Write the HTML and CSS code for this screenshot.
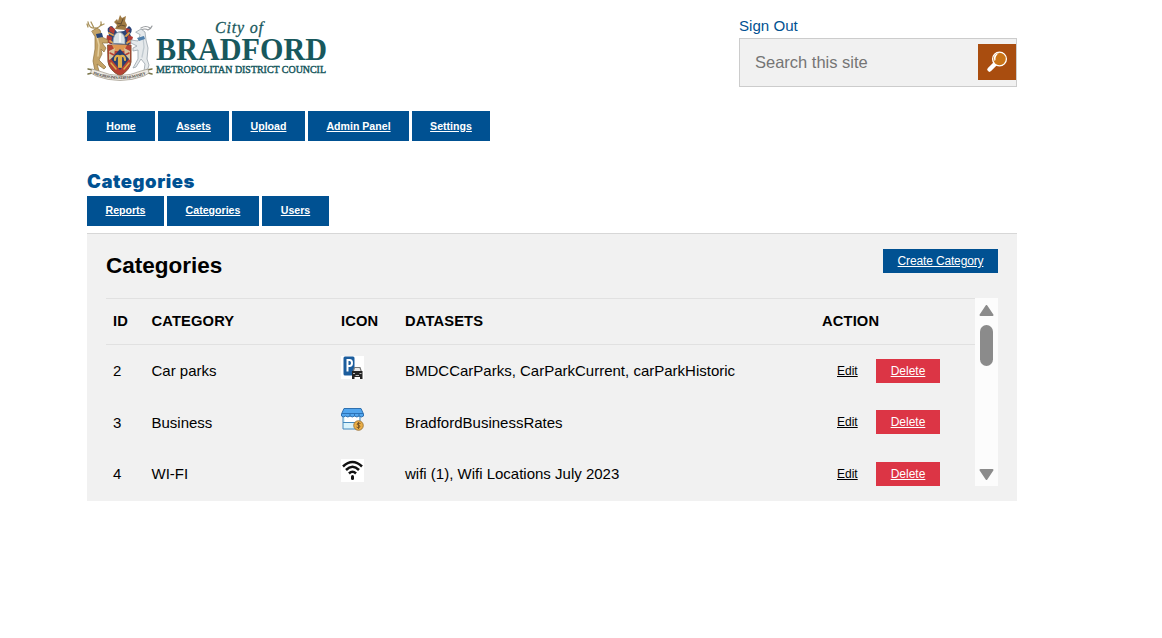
FILE: index.html
```html
<!DOCTYPE html>
<html lang="en">
<head>
<meta charset="utf-8">
<title>Categories</title>
<link rel="stylesheet" href="styles.css">
</head>
<body>
<div class="page">
  <header class="header">
    <svg class="logo" width="244" height="72" viewBox="0 0 244 72">
      <g stroke-linecap="round" stroke-linejoin="round">
        <path d="M23 31Q19 26 22 21Q18 14 25 13L30 19L37 18L42 13Q47 16 43 21Q47 27 42 32Z" fill="#2b4478"/>
        <path d="M20 22l5 2-1 7-5-2zM41 22l5 2-2 7-4-2zM23 13l5 3-1 5-5-3zM38 15l5 1-3 5z" fill="#b23a33"/>
        <path d="M22 20l4 2M42 20l-3 3M23 28l3 2M43 28l-3 2" stroke="#e2a24a" stroke-width="1.800"/>
        <path d="M28 16L30 12L27 9L30 6L31 8L33 2L35 5L39 3L38 8L40 12L38 17Z" fill="#a07b44"/>
        <path d="M30 10l4 1 2-5M31 14l3-2 4 1" fill="none" stroke="#59452c" stroke-width=".9"/>
        <path d="M26 30Q26 20 32 19Q39 20 38 31Z" fill="#d9e2e6" stroke="#8794a0" stroke-width=".8"/>
        <path d="M33 21v8" stroke="#fff" stroke-width="1.500"/>
        <path d="M9 15Q2 16 1 9M7 15L4 9M10 15Q15 13 14 9M13 13l4-2M1 14l-1-3" fill="none" stroke="#a9925c" stroke-width="1.300"/>
        <path d="M5 18L10 15L13 17L15 24L21 27L21 30L15 30L19 35L17 39L14 36L15 41L12 47L19 54L17 56L10 51L12 58L8 58L6 48L8 36L8 24Z" fill="#c5a468" stroke="#8e713e" stroke-width=".7"/>
        <path d="M10 24L12 32L11 43" fill="none" stroke="#e4cf9f" stroke-width="1.500"/>
        <path d="M9 21L15 20L16 24L10 25Z" fill="#284477"/>
        <path d="M54 17Q58 15 61 17Q64 16 65 13M54 15Q59 12 63 15" fill="none" stroke="#9a9da0" stroke-width="1.200"/>
        <path d="M49 19L54 16L58 19L59 27L61 35L60 46L62 52L60 59L57 58L58 51L54 46L49 54L46 55L51 46L51 37L46 38L46 35L50 33L44 30L44 27L51 28L53 22Z" fill="#e5e9eb" stroke="#9ba5ac" stroke-width=".8"/>
        <path d="M56 24L57 34L55 44" fill="none" stroke="#c1cad0" stroke-width="1.300"/>
        <path d="M50 25L57 23L58 26L52 28Z" fill="#5080ac"/>
        <path d="M21 32H44V49Q43 57 33 63Q22 57 21 49Z" fill="#b74234" stroke="#87512e"/>
        <path d="M25 32H40L37 38L28 38Z" fill="#df9851"/>
        <path d="M22 38L28 35L27 44L22 47ZM43 38L37 35L38 44L43 47Z" fill="#d6c39b"/>
        <path d="M23 40l4 2M38 42l4-2" stroke="#b74234" stroke-width="1.500"/>
        <path d="M33 36L42 46L33 57L24 46Z" fill="#283e70"/>
        <path d="M28 47Q28 42 32 43V54M38 47Q38 42 34 43V54" fill="none" stroke="#dfb04b" stroke-width="2.200"/>
        <path d="M24 50l5 6M42 50l-5 6" stroke="#dfb04b" stroke-width="1.500"/>
        <path d="M1 56L6 57L5 60L1 61M65 56L60 57L61 60L65 61" fill="none" stroke="#787346" stroke-width="1.500"/>
        <path d="M5 56L12 58Q33 67 54 58L61 56L62 60L57 63Q33 72 9 63L4 60Z" fill="#eeeae3" stroke="#9b9385" stroke-width=".7"/>
      </g>
      <path id="motto" d="M6 61Q33 71 60 61" fill="none"/>
      <text class="motto"><textPath href="#motto" textLength="54">PROGRESS INDUSTRY HUMANITY</textPath></text>
      <text class="logo-city" x="128" y="20" textLength="48">City of</text>
      <text class="logo-name" x="69" y="47" textLength="171" lengthAdjust="spacingAndGlyphs">BRADFORD</text>
      <text class="logo-sub" x="69" y="60" textLength="170" lengthAdjust="spacingAndGlyphs">METROPOLITAN DISTRICT COUNCIL</text>
    </svg>
    <div class="account">
      <a class="sign-out" href="#">Sign Out</a>
      <form class="search">
        <input class="search-input" type="text" placeholder="Search this site" aria-label="Search this site">
        <button class="search-button" type="button" aria-label="Search">
          <svg width="38" height="36" viewBox="0 0 38 36">
            <path d="M17 20L11.500 25.500" stroke="#fff" stroke-width="4.500" stroke-linecap="round"/>
            <circle cx="21.500" cy="15" r="6.900" fill="#ca7417" stroke="#fff" stroke-width="1.300"/>
            <path d="M16.500 17Q14 10 21 9Q17 12 17.500 16Z" fill="#fff"/>
          </svg>
        </button>
      </form>
    </div>
  </header>
  <nav class="nav main-nav">
    <a class="w-home" href="#">Home</a><a class="w-assets" href="#">Assets</a><a class="w-upload" href="#">Upload</a><a class="w-admin" href="#">Admin Panel</a><a class="w-settings" href="#">Settings</a>
  </nav>
  <h1 class="page-title">Categories</h1>
  <nav class="nav sub-nav">
    <a class="w-reports" href="#">Reports</a><a class="w-categories" href="#">Categories</a><a class="w-users" href="#">Users</a>
  </nav>
  <main class="panel">
    <div class="panel-head">
      <h2 class="panel-title">Categories</h2>
      <a class="create" href="#">Create Category</a>
    </div>
    <div class="table-wrap">
      <div class="table">
        <div class="row head"><span>ID</span><span>CATEGORY</span><span>ICON</span><span>DATASETS</span><span>ACTION</span></div>
        <div class="row">
          <span>2</span><span>Car parks</span>
          <svg class="icon" width="23" height="23" viewBox="0 0 23 23">
            <path d="M0 0h23v23H0z" fill="#fff"/><rect x="2.500" y=".5" width="11" height="19" rx="1.500" fill="#1c5d9d"/>
            <path d="M6.500 15.500V4H8.500Q11 4 11 7T8.500 10H6.500" fill="none" stroke="#fff" stroke-width="2"/>
            <path d="M12 16L13.500 11.500H19L20.500 16" fill="#e9e9e9" stroke="#777" stroke-width="1.200"/>
            <path d="M11 15H21.500V23H19V21H13.500V23H11Z" fill="#242424"/>
            <path d="M12 17.500h2M18.500 17.500h2M14.500 19.500h3.500" stroke="#bbb"/>
          </svg>
          <span>BMDCCarParks, CarParkCurrent, carParkHistoric</span>
          <div class="actions"><a class="edit" href="#">Edit</a><a class="delete" href="#">Delete</a></div>
        </div>
        <div class="row">
          <span>3</span><span>Business</span>
          <svg class="icon" width="23" height="23" viewBox="0 0 23 23">
            <path d="M2 8V21H19V8" fill="#d9f3fb" stroke="#4388bd"/>
            <path d="M4 9h14v5H4z" fill="#fff"/><path d="M2 14.500h15" stroke="#4388bd"/>
            <path d="M3 .5H20L22.500 6V8Q20.500 10 18 8Q16 10 13.500 8Q11.500 10 9 8Q7 10 4.500 8Q2 10 .5 8V6Z" fill="#52a6ee" stroke="#2f70af"/>
            <path d="M1 5.500h21M9 6v2M13.500 6v2M18 6v2" stroke="#2b72b7"/>
            <circle cx="17.500" cy="17.500" r="4.800" fill="#e9ae48" stroke="#936b2e" stroke-width=".8"/>
            <path d="M19.500 15.500Q16 14 16 16.500Q19.500 17 19 19Q17 20.500 15.500 19M17.500 14v7" fill="none" stroke="#755426" stroke-width=".9"/>
          </svg>
          <span>BradfordBusinessRates</span>
          <div class="actions"><a class="edit" href="#">Edit</a><a class="delete" href="#">Delete</a></div>
        </div>
        <div class="row">
          <span>4</span><span>WI-FI</span>
          <svg class="icon" width="23" height="23" viewBox="0 0 23 23">
            <path d="M0 0h23v23H0z" fill="#fff"/>
            <path d="M2 7.500Q11.500-1.500 21 7.500M5 11Q11.500 4.500 18 11M8 14.500Q11.500 11 15 14.500" fill="none" stroke="#111" stroke-width="2.500"/>
            <path d="M11.500 17.500v2" stroke="#111" stroke-width="3" stroke-linecap="round"/>
          </svg>
          <span>wifi (1), Wifi Locations July 2023</span>
          <div class="actions"><a class="edit" href="#">Edit</a><a class="delete" href="#">Delete</a></div>
        </div>
      </div>
      <div class="scrollbar">
        <svg width="15" height="11" viewBox="0 0 15 11"><path d="M7.500 1L13.500 10H1.500Z" fill="#8b8b8b" stroke="#8b8b8b" stroke-width="2" stroke-linejoin="round"/></svg>
        <div class="thumb"></div>
        <svg class="down" width="15" height="11" viewBox="0 0 15 11"><path d="M7.500 10L1.500 1H13.500Z" fill="#8b8b8b" stroke="#8b8b8b" stroke-width="2" stroke-linejoin="round"/></svg>
      </div>
    </div>
  </main>
</div>
</body>
</html>
```
FILE: styles.css
```css
* { box-sizing: border-box; }
body { margin: 0; background: #fff; color: #000; font-family: "Liberation Sans", Arial, sans-serif; overflow: hidden; }
.page { width: 930px; margin-left: 87px; padding-top: 13px; }
.header { display: flex; justify-content: space-between; height: 98px; }
.logo { display: block; overflow: visible; }
.logo text { fill: #18585d; font-family: "Liberation Serif", serif; }
.logo .logo-city { font-size: 16px; font-style: italic; stroke: #18585d; stroke-width: .3px; }
.logo .logo-name { font-size: 31px; font-weight: bold; }
.logo .logo-sub { font-size: 10.5px; stroke: #18585d; stroke-width: .45px; }
.logo .motto { font-size: 4px; font-weight: bold; fill: #4b4742; }
.account { width: 278px; padding-top: 1px; }
.sign-out { display: block; height: 24px; line-height: 24px; font-size: 15.1px; color: #005192; text-decoration: none; }
.search { display: flex; align-items: center; height: 49px; margin: 0; border: 1px solid #ccc; background: #f1f1f1; }
.search-input { flex: 1; min-width: 0; padding: 0 0 0 15px; border: 0; background: transparent; font: 16.5px "Liberation Sans", Arial, sans-serif; }
.search-input::placeholder { color: #757575; }
.search-button { width: 38px; height: 36px; margin-bottom: 1px; padding: 0; border: 0; background: #a94d0f; }
.search-button svg { display: block; }
.nav { display: flex; gap: 3px; }
.nav a { height: 30px; background: #005192; color: #fff; font-size: 10.6px; font-weight: bold; line-height: 30px; text-align: center; }
.sub-nav a { line-height: 29px; }
.w-home { width: 68px; }
.w-assets { width: 71px; }
.w-upload { width: 73px; }
.w-admin { width: 101px; }
.w-settings { width: 78px; }
.w-reports { width: 77px; }
.w-categories { width: 92px; }
.w-users { width: 67px; }
.page-title { margin: 30px 0 5px; height: 20px; line-height: 20px; font-family: Inter, sans-serif; font-size: 18.5px; font-weight: 900; letter-spacing: .55px; color: #005192; }
.panel { height: 268px; margin-top: 7px; padding: 15px 19px 0; border-top: 1px solid #d7d7d7; background: #f1f1f1; }
.panel-head { display: flex; justify-content: space-between; align-items: flex-start; height: 49px; }
.panel-title { margin: 0; font-size: 22.5px; line-height: 33px; }
.create { width: 115px; height: 24px; background: #005192; color: #fff; font-size: 12px; letter-spacing: -.15px; line-height: 25px; text-align: center; }
.table-wrap { display: flex; height: 188px; overflow: hidden; }
.table { width: 869px; font-size: 15px; }
.row { display: grid; grid-template-columns: 38.5px 189.5px 64px 417px 1fr; align-items: center; height: 51.5px; padding-left: 7px; }
.head { height: 47px; padding-bottom: 2px; border-top: 1px solid #e1e1e1; border-bottom: 1px solid #e1e1e1; font-size: 14.7px; font-weight: bold; letter-spacing: .15px; }
.icon { display: block; margin-top: -6px; }
.actions { display: flex; align-items: center; padding-left: 15px; font-size: 12px; }
.edit { width: 39px; color: #000; }
.delete { width: 64px; height: 24px; background: #dc3545; color: #fff; line-height: 25px; text-align: center; }
.scrollbar { display: flex; flex-direction: column; align-items: center; width: 23px; padding: 7px 0 6px; background: #fcfcfc; }
.thumb { width: 13px; height: 41px; margin-top: 9px; border-radius: 7px; background: #8b8b8b; }
.down { margin-top: auto; }
```
